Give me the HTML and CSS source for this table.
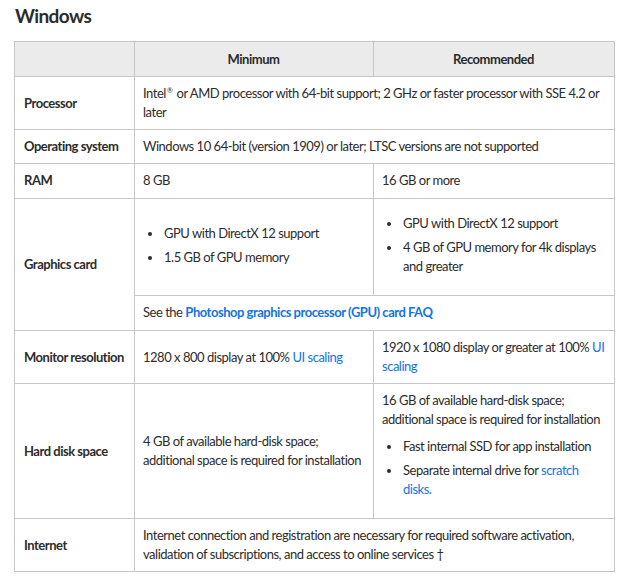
FILE: index.html
```html
<!DOCTYPE html>
<html lang="en">
<head>
<meta charset="utf-8">
<title>Windows system requirements</title>
<link rel="stylesheet" href="styles.css">
</head>
<body>
<h2 class="title">Windows</h2>
<table class="req">
  <colgroup>
    <col class="c-label">
    <col class="c-min">
    <col class="c-rec">
  </colgroup>
  <thead>
    <tr>
      <th></th>
      <th>Minimum</th>
      <th>Recommended</th>
    </tr>
  </thead>
  <tbody>
    <tr>
      <td class="label">Processor</td>
      <td colspan="2">Intel<span class="reg">®</span> or AMD processor with 64-bit support; 2 GHz or faster processor with SSE 4.2 or later</td>
    </tr>
    <tr>
      <td class="label">Operating system</td>
      <td colspan="2">Windows 10 64-bit (version 1909) or later; LTSC versions are not supported</td>
    </tr>
    <tr class="tall">
      <td class="label">RAM</td>
      <td>8 GB</td>
      <td>16 GB or more</td>
    </tr>
    <tr>
      <td class="label" rowspan="2">Graphics card</td>
      <td>
        <ul class="list">
          <li>GPU with DirectX 12 support</li>
          <li>1.5 GB of GPU memory</li>
        </ul>
      </td>
      <td>
        <ul class="list">
          <li>GPU with DirectX 12 support</li>
          <li>4 GB of GPU memory for 4k displays and greater</li>
        </ul>
      </td>
    </tr>
    <tr class="tall">
      <td colspan="2">See the <a class="link strong" href="#">Photoshop graphics processor (GPU) card FAQ</a></td>
    </tr>
    <tr>
      <td class="label">Monitor resolution</td>
      <td>1280 x 800 display at 100% <a class="link" href="#">UI scaling</a></td>
      <td>1920 x 1080 display or greater at 100% <a class="link" href="#">UI scaling</a></td>
    </tr>
    <tr>
      <td class="label">Hard disk space</td>
      <td>4 GB of available hard-disk space; additional space is required for installation</td>
      <td>
        <p class="para">16 GB of available hard-disk space; additional space is required for installation</p>
        <ul class="list">
          <li>Fast internal SSD for app installation</li>
          <li>Separate internal drive for <a class="link" href="#">scratch disks.</a></li>
        </ul>
      </td>
    </tr>
    <tr>
      <td class="label">Internet</td>
      <td colspan="2">Internet connection and registration are necessary for required software activation, validation of subscriptions, and access to online services †</td>
    </tr>
  </tbody>
</table>
</body>
</html>
```
FILE: styles.css
```css
html, body {
  background: #ffffff;
}
body {
  margin: 0;
  padding: 0 10px 0 14px;
  font-family: Lato, "Noto Sans", sans-serif;
  font-size: 13px;
  letter-spacing: -0.48px;
  color: #2c2c2c;
}
.title {
  margin: 4px 0 13px 1px;
  font-size: 19px;
  line-height: 24px;
  font-weight: 700;
  letter-spacing: -0.6px;
  color: #2c2c2c;
}
.req {
  width: 600px;
  table-layout: fixed;
  border-collapse: collapse;
  border: 1px solid #c6c6c6;
}
.c-label { width: 120px; }
.c-min { width: 239px; }
.c-rec { width: 241px; }
.req th,
.req td {
  border: 1px solid #c6c6c6;
  padding: 7px 9px 7px 8px;
  line-height: 19px;
  text-align: left;
  vertical-align: middle;
}
.req th {
  background: #ebebeb;
  padding-top: 8px;
  padding-bottom: 7px;
  font-weight: 700;
  text-align: center;
}
.req .tall td {
  padding-bottom: 8px;
}
.req td.label {
  padding-left: 9px;
  font-weight: 700;
}
.reg {
  display: inline-block;
  margin: 0 1px 0 1px;
  font-size: 7px;
  vertical-align: top;
  line-height: 12px;
  letter-spacing: 0;
}
.link {
  color: #1473e6;
  text-decoration: none;
}
.strong {
  font-weight: 700;
}
.para {
  margin: 0;
}
.list {
  margin: 8px 0 12px;
  padding-left: 21px;
  list-style: none;
}
.list li {
  position: relative;
}
.list li + li {
  margin-top: 5px;
}
.list li::before {
  content: "";
  position: absolute;
  left: -16px;
  top: 8px;
  width: 4px;
  height: 4px;
  border-radius: 50%;
  background: #2c2c2c;
}
```
